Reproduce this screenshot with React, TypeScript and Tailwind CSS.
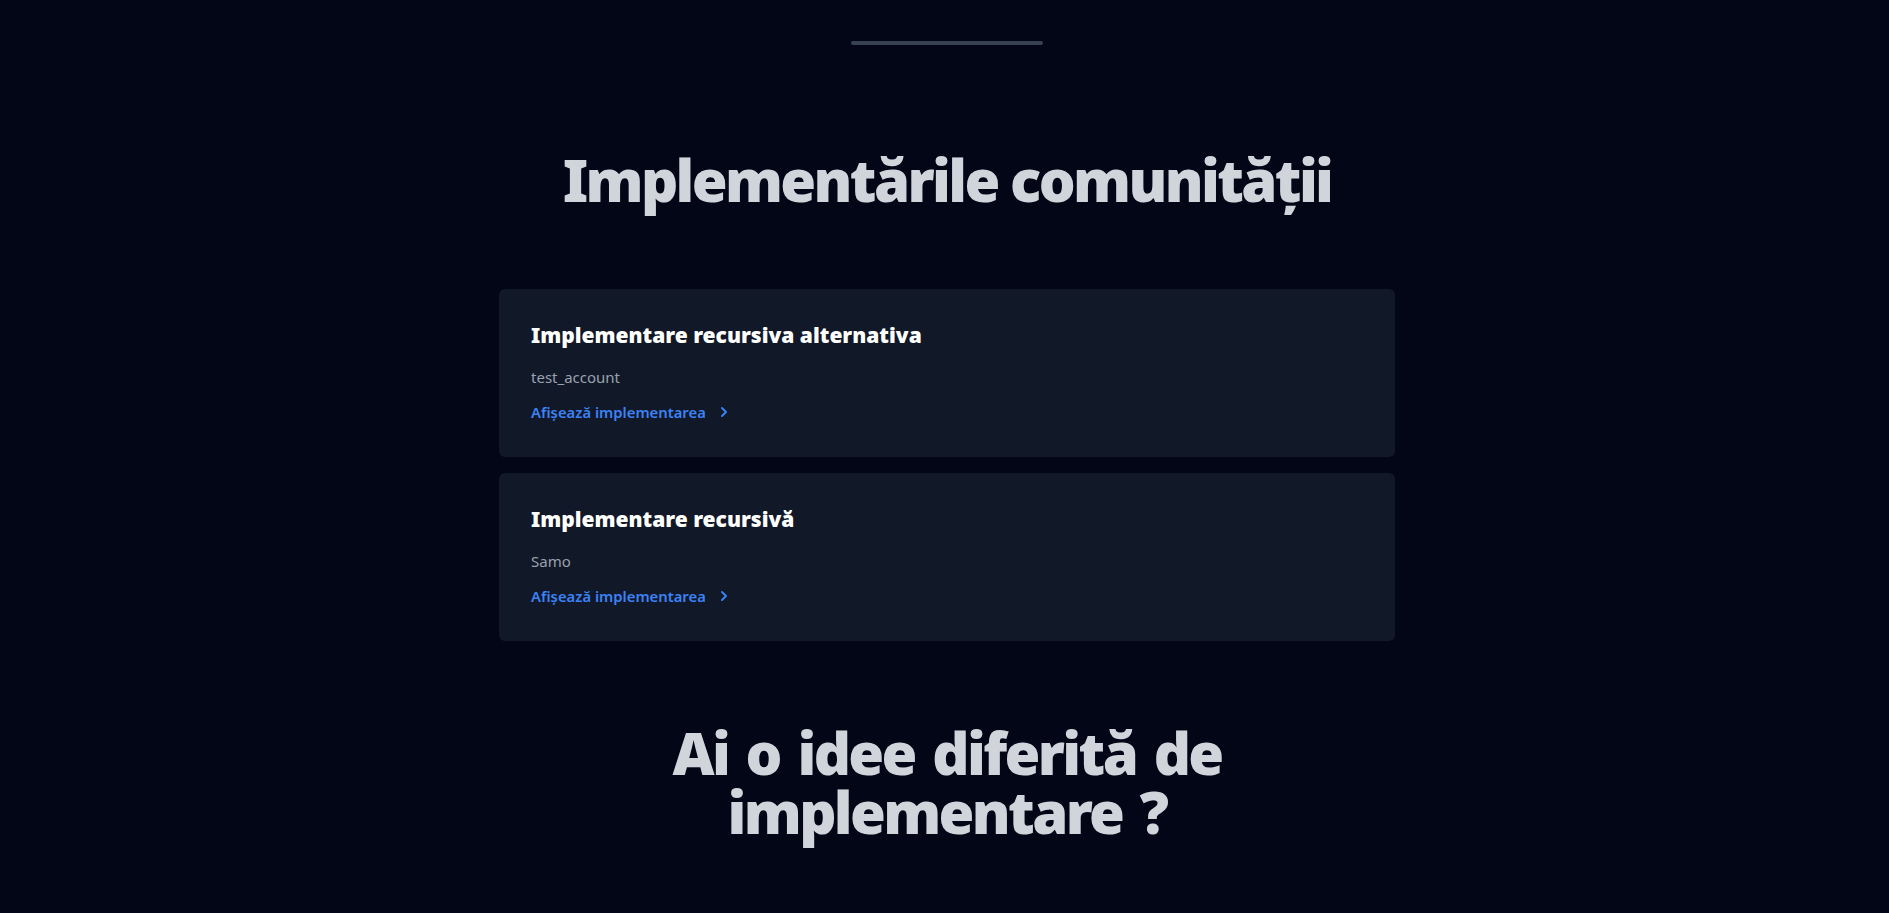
import { ChevronRight } from 'lucide-react';

type Implementation = {
    id: string;
    title: string;
    author: string;
};

const implementations: Implementation[] = [
    { id: 'alt', title: 'Implementare recursiva alternativa', author: 'test_account' },
    { id: 'rec', title: 'Implementare recursivă', author: 'Samo' },
];

function ImplementationCard({ item }: { item: Implementation }) {
    return (
        <div className="rounded-md bg-[#111827] px-8 pt-8 pb-[33px]">
            <h3 className="text-[21px] leading-7 font-black text-white">{item.title}</h3>
            <p className="mt-[18px] text-[15px] leading-5 text-gray-400">{item.author}</p>
            <a href="#" className="mt-[15px] inline-flex items-center gap-[10px] text-[14.8px] leading-5 font-semibold text-[#3b82f6]">
                Afișează implementarea
                <ChevronRight size={16} strokeWidth={3} />
            </a>
        </div>
    );
}

export default function App() {
    return (
        <div className="min-h-screen bg-[#020617] font-['Noto_Sans','Open_Sans',sans-serif] text-gray-300">
            <div className="flex flex-col items-center pt-[41px] pl-[5px]">
                {/* separator */}
                <div className="h-1 w-48 rounded-full bg-[#374151]" />

                <h1 className="mt-[105px] text-[58px] leading-[60px] font-black tracking-[-0.045em] text-[#d1d5db]">
                    Implementările comunității
                </h1>

                {/* community implementations */}
                <div className="mt-[79px] flex w-full max-w-4xl flex-col gap-4">
                    {implementations.map((item) => (
                        <ImplementationCard key={item.id} item={item} />
                    ))}
                </div>

                <h2 className="mt-[82px] max-w-2xl text-center text-[58px] leading-[59px] font-black tracking-[-0.045em] [word-spacing:5px] text-[#d1d5db]">
                    Ai o idee diferită de implementare ?
                </h2>
            </div>
        </div>
    );
}
